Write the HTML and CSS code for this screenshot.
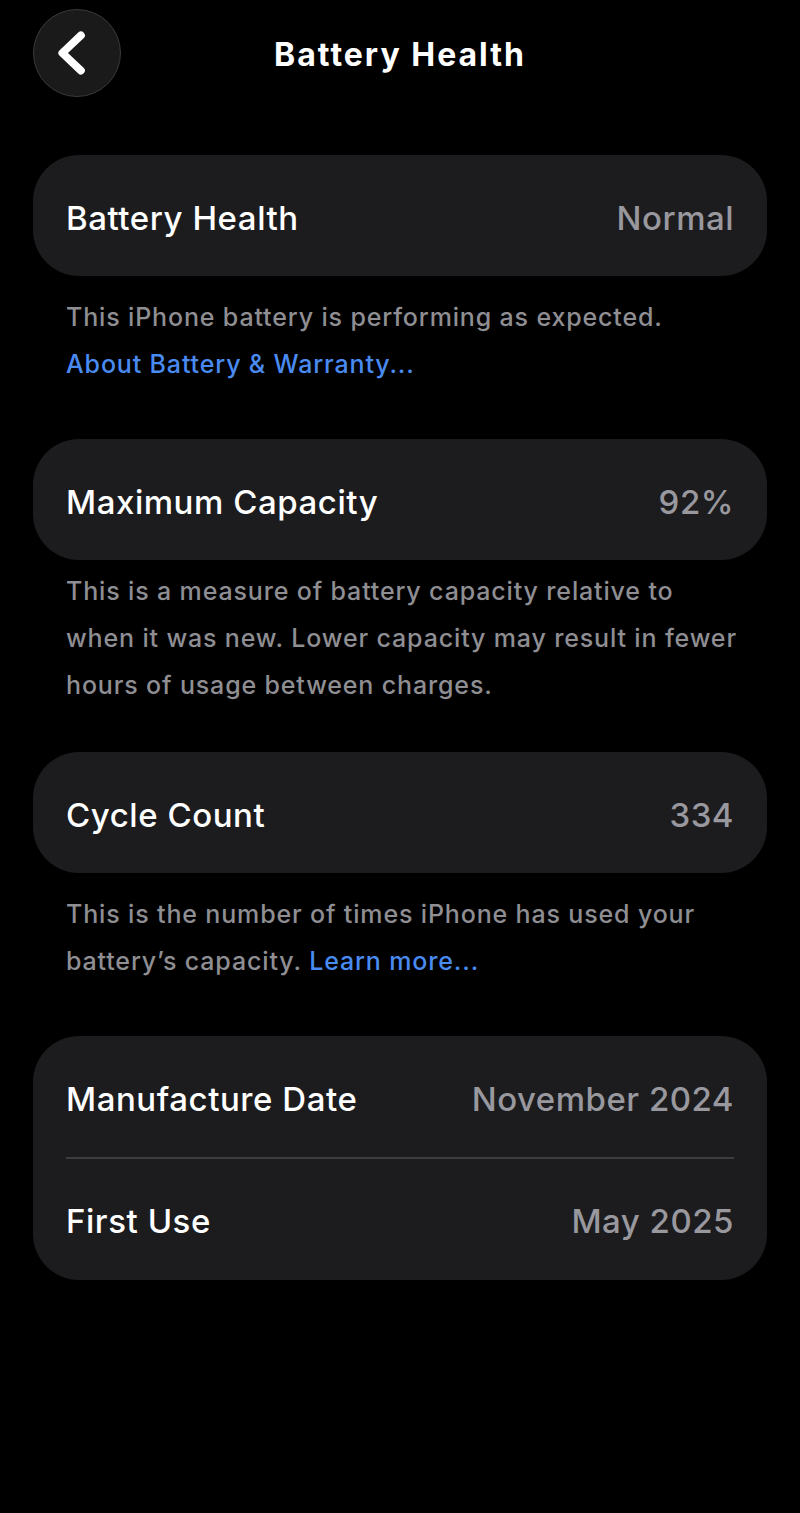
FILE: index.html
```html
<!DOCTYPE html>
<html lang="en">
<head>
<meta charset="utf-8">
<title>Battery Health</title>
<link rel="stylesheet" href="styles.css">
</head>
<body>
<div class="screen">
  <header class="nav">
    <button class="back" aria-label="Back">
      <svg viewBox="0 0 88 88" width="88" height="88">
        <path d="M48 30 L29 48 L48 66" transform="translate(0,-4)" fill="none" stroke="#ffffff" stroke-width="8" stroke-linecap="round" stroke-linejoin="round"/>
      </svg>
    </button>
    <h1 class="title">Battery Health</h1>
  </header>

  <div class="card">
    <div class="row"><span class="label">Battery Health</span><span class="value">Normal</span></div>
  </div>
  <p class="note note-1">This iPhone battery is performing as expected.<br><a class="link" href="#">About Battery &amp; Warranty...</a></p>

  <div class="card">
    <div class="row"><span class="label">Maximum Capacity</span><span class="value">92%</span></div>
  </div>
  <p class="note note-2">This is a measure of battery capacity relative to when it was new. Lower capacity may result in fewer hours of usage between charges.</p>

  <div class="card">
    <div class="row"><span class="label">Cycle Count</span><span class="value">334</span></div>
  </div>
  <p class="note note-3">This is the number of times iPhone has used your battery’s capacity. <a class="link" href="#">Learn more...</a></p>

  <div class="card">
    <div class="row"><span class="label">Manufacture Date</span><span class="value">November 2024</span></div>
    <div class="divider"></div>
    <div class="row"><span class="label">First Use</span><span class="value">May 2025</span></div>
  </div>
</div>
</body>
</html>
```

FILE: styles.css
```css
* { box-sizing: border-box; }
html, body {
  margin: 0;
  padding: 0;
  background: #000000;
}
body {
  font-family: Inter, "Noto Sans", "Liberation Sans", sans-serif;
  color: #ffffff;
  width: 800px;
  min-height: 1513px;
}
.screen {
  padding: 9px 33px 0 33px;
}
.nav {
  display: flex;
  align-items: center;
  height: 88px;
  margin-bottom: 58px;
  position: relative;
}
.back {
  width: 88px;
  height: 88px;
  border-radius: 50%;
  background: #1a1a1b;
  border: 1.5px solid #3a3a3c;
  padding: 0;
  display: flex;
  align-items: center;
  justify-content: center;
  margin: 0;
}
.back svg { display: block; }
.title {
  position: absolute;
  left: 0;
  right: 0;
  top: 0;
  bottom: 0;
  margin: 0 auto;
  width: max-content;
  display: flex;
  align-items: center;
  font-size: 32px;
  font-weight: 700;
  letter-spacing: 2px;
  padding-top: 2px;
  pointer-events: none;
}
.card {
  background: #1c1c1e;
  border-radius: 46px;
  padding: 0 33px;
}
.row {
  height: 121px;
  display: flex;
  align-items: center;
  justify-content: space-between;
  padding-top: 4px;
}
.label {
  font-size: 33px;
  font-weight: 500;
  letter-spacing: 0.55px;
  color: #ffffff;
}
.value {
  font-size: 33px;
  font-weight: 500;
  letter-spacing: 0.5px;
  color: #98989e;
}
.divider {
  height: 1.5px;
  background: #3d3d40;
}
.note {
  margin: 0;
  padding: 0 28px 0 33px;
  font-size: 25px;
  line-height: 47px;
  letter-spacing: 0.85px;
  color: #8e8e93;
  font-weight: 500;
}
.note-1 { margin: 18px 0 51px; }
.note-2 { margin: 8px 0 43px; }
.note-3 { margin: 18px 0 51px; }
.link {
  color: #4a8bf2;
  text-decoration: none;
}
```
